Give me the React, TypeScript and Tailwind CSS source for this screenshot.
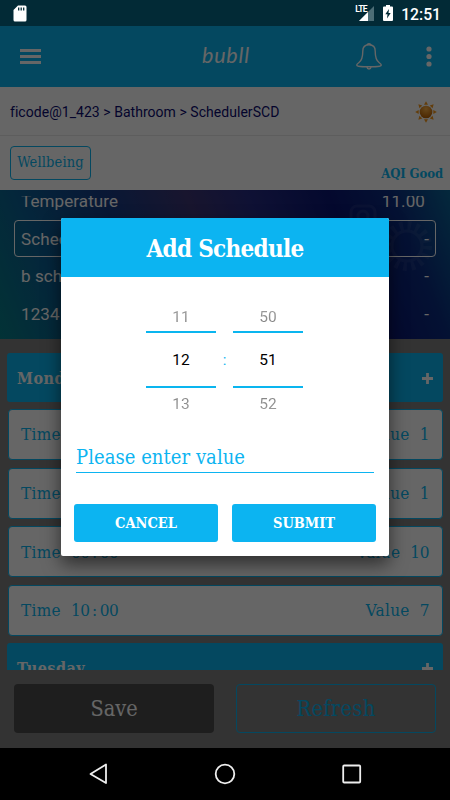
import React from "react";

interface Sensor {
  name: string;
  value: string;
  active?: boolean;
}

interface Slot {
  hour: string;
  minute: string;
  value: string;
}

const sensors: Sensor[] = [
  { name: "Temperature", value: "11.00" },
  { name: "SchedulerSCD", value: "-", active: true },
  { name: "b schedule", value: "-" },
  { name: "1234", value: "-" },
];

const slots: Slot[] = [
  { hour: "00", minute: "00", value: "1" },
  { hour: "00", minute: "00", value: "1" },
  { hour: "00", minute: "00", value: "10" },
  { hour: "10", minute: "00", value: "7" },
];

const slab = "font-['DejaVu_Serif_Condensed','DejaVu_Serif',serif] [font-stretch:condensed]";

const StatusBar = () => (
  <div className="flex h-[26px] shrink-0 items-center bg-[#022a36] pl-[13px] pr-[9px] text-white">
    <svg width="14" height="17" viewBox="0 0 14 17" className="mt-px">
      <path d="M5 .5h7Q13.5.5 13.5 2v13q0 1.5-1.500 1.500H2Q.5 16.500.5 15V5z" fill="#fff" />
      <path d="M5.700 2.500v3M8.200 2.500v3M10.700 2.500v3" stroke="#022a36" strokeWidth="1.300" />
    </svg>
    <div className="flex-1" />
    <div className="relative mr-[9px] h-[17px] w-[19px]">
      <svg width="19" height="17" viewBox="0 0 19 17">
        <path d="M19 1v15H4z" fill="#4c6d76" />
        <path d="M13 7v9H4z" fill="#fff" />
      </svg>
      <span className="absolute left-0 top-0 bg-[#022a36] font-['Roboto',sans-serif] text-[8.5px] font-bold leading-[8px] tracking-[-0.7px]">
        LTE
      </span>
    </div>
    <svg width="10" height="16" viewBox="0 0 10 16" className="mr-[8px]">
      <path d="M3 0h4v1.500h2q1 0 1 1V15q0 1-1 1H1q-1 0-1-1V2.500q0-1 1-1h2z" fill="#fff" />
      <path d="M6 4L2.300 9.300h2.200L4 13.500 7.700 8H5.500z" fill="#022a36" />
    </svg>
    <span className="mt-[3px] font-['Roboto',sans-serif] text-[15.7px] font-medium leading-none">12:51</span>
  </div>
);

const Header = () => (
  <div className="flex h-[61px] shrink-0 items-center bg-[#0ab5ef] pl-5 pr-[18px]">
    <div className="w-[21px] space-y-[3px]">
      <hr className="h-[3px] border-0 bg-white" />
      <hr className="h-[3px] border-0 bg-white" />
      <hr className="h-[3px] border-0 bg-white" />
    </div>
    <p className="mb-[2px] ml-[161px] w-[60px] font-['Lato',sans-serif] text-[21.5px] italic leading-none tracking-[0.8px] text-white">
      bubll
    </p>
    <div className="flex-1" />
    <svg
      width="26"
      height="28"
      viewBox="0 0 26 28"
      fill="none"
      stroke="#fff"
      strokeWidth="1.400"
      className="mb-px mr-[44px]"
    >
      <path d="M13 2.800C8.500 2.800 6.800 5.500 6.800 9c0 7-1 9.500-3.800 11.500-1.500 1.100-2.300 1.800-2.300 2.600 0 .9 1 1.700 12.300 1.700s12.300-.8 12.300-1.700c0-.8-.8-1.500-2.300-2.600-2.800-2-3.800-4.500-3.800-11.500 0-3.500-1.700-6.200-6.200-6.200z" />
      <path d="M11 2.900a2.100 1.900 0 0 1 4 0M11 25c.3 2.600 3.700 2.600 4 0" />
    </svg>
    <svg width="6" height="21" viewBox="0 0 6 21" fill="#fff">
      <circle cx="3" cy="3" r="2.600" />
      <circle cx="3" cy="10.500" r="2.600" />
      <circle cx="3" cy="18" r="2.600" />
    </svg>
  </div>
);

const Sun = () => (
  <svg width="22" height="22" viewBox="-11 -11 22 22">
    <defs>
      <radialGradient id="sun" cx=".5" cy=".25" r=".75">
        <stop offset="0" stopColor="#ffb347" />
        <stop offset="1" stopColor="#b95f00" />
      </radialGradient>
    </defs>
    {[0, 45, 90, 135, 180, 225, 270, 315].map((angle) => (
      <path key={angle} d="M-2-7.300L0-10.800 2-7.300z" fill="#f79a1c" transform={`rotate(${angle})`} />
    ))}
    <circle r="6.300" fill="url(#sun)" />
  </svg>
);

const Gear = () => (
  <svg
    width="92"
    height="70"
    viewBox="0 0 92 70"
    className="absolute right-[9px] top-[13px]"
    fill="none"
    stroke="#fff"
    opacity=".06"
  >
    <rect x="2" y="3" width="24" height="24" rx="6" strokeWidth="3" />
    <circle cx="14" cy="13" r="5" strokeWidth="3" />
    <circle cx="58" cy="43" r="15" strokeWidth="3" />
    <circle cx="58" cy="43" r="20.500" strokeWidth="9" strokeDasharray="3.500 4.550" />
  </svg>
);

const SensorPanel = () => (
  <div className="relative h-[149px] shrink-0 bg-[linear-gradient(68deg,#077f88_0%,#0b5f94_15%,#173c85_32%,#3d3573_48%,#262b83_60%,#0a1673_76%,#0c2c80_88%,#0b6597_100%)] pt-[6px]">
    <Gear />
    <div className="h-[143px] overflow-hidden">
      <div className="-mt-[14px] px-[14px]">
        {sensors.map((sensor) => (
          <div
            key={sensor.name}
            className={`flex h-[37.5px] items-center justify-between rounded border px-[6px] pt-[2px] font-['Roboto',sans-serif] text-[17px] tracking-[0.1px] text-white ${
              sensor.active ? "border-white" : "border-transparent"
            }`}
          >
            <span>{sensor.name}</span>
            <span className={sensor.value === "-" ? "" : "mr-[4px]"}>{sensor.value}</span>
          </div>
        ))}
      </div>
    </div>
  </div>
);

const DayBar = ({ day }: { day: string }) => (
  <div className="flex h-[49px] items-center justify-between rounded-[3px] bg-[#0ab5ef] px-[10px] text-white">
    <span className={`${slab} mt-[2px] text-[16px] font-bold tracking-[0.5px]`}>{day}</span>
    <svg width="11" height="11" viewBox="0 0 11 11" stroke="#fff" strokeWidth="2.800" className="mt-px">
      <path d="M5.500 0v11M0 5.500h11" />
    </svg>
  </div>
);

const Schedule = () => (
  <div className="h-[331px] shrink-0 overflow-hidden px-[7px] pt-[14px]">
    <DayBar day="Monday" />
    <div className="mb-[7px] mt-[7px] space-y-[7.7px] px-[0.5px]">
      {slots.map((slot, i) => (
        <div
          key={i}
          className={`${slab} flex h-[51px] items-center justify-between rounded border border-[#0ab5ef] bg-white px-[12.5px] pt-px text-[17px] tracking-[0.3px] text-[#0ab5ef]`}
        >
          <div className="flex">
            <span className="w-[50px]">Time</span>
            <span className="tracking-[-0.4px]">{slot.hour}</span>
            <span className="w-[10px] text-center">:</span>
            <span className="tracking-[-0.4px]">{slot.minute}</span>
          </div>
          <div className="flex gap-[10px]">
            <span>Value</span>
            <span className="tracking-[-0.4px]">{slot.value}</span>
          </div>
        </div>
      ))}
    </div>
    <DayBar day="Tuesday" />
  </div>
);

const Footer = () => (
  <div className={`${slab} flex h-[78px] shrink-0 justify-between px-[14px] pt-[14px] text-[21.5px]`}>
    <div className="flex h-[49px] w-[200px] items-center justify-center rounded bg-[#4b4b4b] pt-[2px] text-white">
      Save
    </div>
    <div className="flex h-[49px] w-[200px] items-center justify-center rounded border border-[#0ab5ef] pt-[2px] tracking-[0.4px] text-[#0ab5ef]">
      Refresh
    </div>
  </div>
);

const Wheel = ({ values }: { values: string[] }) => (
  <div className="w-[70px] text-center font-['Roboto',sans-serif] text-[15.5px] leading-none">
    <p className="flex h-[29px] items-center justify-center bg-gradient-to-b from-[#aaa] to-[#777] bg-clip-text pt-[2px] text-transparent">
      {values[0]}
    </p>
    <p className="flex h-[57px] items-center justify-center border-y-2 border-[#0ab5ef] pt-[2px] text-black">
      {values[1]}
    </p>
    <p className="flex h-[32px] items-center justify-center bg-gradient-to-b from-[#777] to-[#aaa] bg-clip-text pt-px text-transparent">
      {values[2]}
    </p>
  </div>
);

const Dialog = () => (
  <div className="h-[338px] w-[328px] overflow-hidden rounded-[2px] bg-white shadow-[0_8px_18px_0px_rgba(0,0,0,0.55)]">
    <div className="flex h-[59px] items-center justify-center bg-[#0cb4f1] pt-[2px]">
      <h2 className={`${slab} text-[24px] font-bold tracking-[-0.7px] text-white`}>Add Schedule</h2>
    </div>
    <div className="flex justify-center pr-px pt-[25px]">
      <Wheel values={["11", "12", "13"]} />
      <span className="w-[17px] pt-[48px] text-center font-['Roboto',sans-serif] text-[15px] leading-[20px] text-[#0cb4f1]">
        :
      </span>
      <Wheel values={["50", "51", "52"]} />
    </div>
    <div
      className={`${slab} mx-[15px] mt-[20px] h-[33px] border-b border-[#0cb4f1] text-[20px] leading-[34px] tracking-[0.05px] text-[#0cb4f1]`}
    >
      Please enter value
    </div>
    <div className={`${slab} mt-[31px] flex justify-center gap-[14px] text-[14.5px] font-bold text-white`}>
      <button className="h-[38px] w-[144px] rounded-[3px] bg-[#0cb4f1]">CANCEL</button>
      <button className="h-[38px] w-[144px] rounded-[3px] bg-[#0cb4f1]">SUBMIT</button>
    </div>
  </div>
);

const NavBar = () => (
  <div className="h-[52px] shrink-0 bg-black">
    <svg
      width="450"
      height="52"
      viewBox="0 0 450 52"
      fill="none"
      stroke="#eee"
      strokeWidth="1.800"
      strokeLinejoin="round"
    >
      <path d="M106 16.500v18.500L90.500 26z" />
      <circle cx="225" cy="26" r="9.300" />
      <rect x="343.200" y="17.500" width="17" height="17" rx="1" />
    </svg>
  </div>
);

const App: React.FC = () => {
  return (
    <div className="flex h-[800px] w-[450px] flex-col overflow-hidden">
      <StatusBar />
      <div className="relative flex h-[722px] shrink-0 flex-col bg-[#808080]">
        <Header />
        <div className="flex h-[49px] shrink-0 items-center justify-between border-b border-[#e8e8e8] bg-white pl-[10px] pr-[13px] pt-px">
          <span className="pt-px font-['Roboto',sans-serif] text-[14px] tracking-[0.04px] text-[#0b0b70]">
            ficode@1_423 &gt; Bathroom &gt; SchedulerSCD
          </span>
          <Sun />
        </div>
        <div className={`${slab} flex h-[54px] shrink-0 justify-between bg-white pl-[10px] pr-[7px] text-[#0ab5ef]`}>
          <div className="mt-[10px] flex h-[34px] w-[81px] items-center justify-center rounded border border-[#0ab5ef] text-[14.5px] tracking-[0.15px]">
            Wellbeing
          </div>
          <span className="self-end pb-[7px] text-[13px] font-bold tracking-[-0.1px]">AQI Good</span>
        </div>
        <SensorPanel />
        <Schedule />
        <Footer />
        <div className="absolute inset-0 flex justify-center bg-black/60 pt-[192px]">
          <Dialog />
        </div>
      </div>
      <NavBar />
    </div>
  );
};

export default App;
